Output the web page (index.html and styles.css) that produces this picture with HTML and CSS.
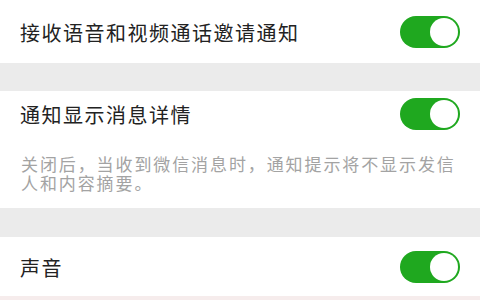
FILE: index.html
```html
<!DOCTYPE html>
<html lang="zh">
<head>
<meta charset="utf-8">
<link rel="stylesheet" href="styles.css">
</head>
<body>
<div class="page">
  <div class="row row-first">
    <span class="title">接收语音和视频通话邀请通知</span>
    <span class="toggle"><span class="knob"></span></span>
  </div>
  <div class="gap gap-1"></div>
  <div class="section">
    <div class="row row-head">
      <span class="title">通知显示消息详情</span>
      <span class="toggle"><span class="knob"></span></span>
    </div>
    <p class="desc">关闭后，当收到微信消息时，通知提示将不显示发信人和内容摘要。</p>
  </div>
  <div class="gap gap-2"></div>
  <div class="row row-last">
    <span class="title">声音</span>
    <span class="toggle"><span class="knob"></span></span>
  </div>
  <div class="edge"></div>
</div>
</body>
</html>
```
FILE: styles.css
```css
* { box-sizing: border-box; }
html, body { margin: 0; padding: 0; background: #ffffff; }
.page {
  width: 480px;
  height: 300px;
  overflow: hidden;
  display: flex;
  flex-direction: column;
  font-family: "Noto Sans CJK SC", "Noto Sans", sans-serif;
}
.row {
  display: flex;
  align-items: center;
  justify-content: space-between;
  padding: 0 20px 0 20px;
  background: #fff;
}
.row-first { height: 63px; }
.row-head { height: 46px; }
.row-last { height: 59px; }
.title {
  font-size: 20px;
  letter-spacing: 1.5px;
  color: #222222;
  line-height: 24px;
  padding-top: 2px;
}
.toggle {
  width: 60px;
  height: 32px;
  border-radius: 16px;
  background: #1fa81f;
  display: flex;
  align-items: center;
  justify-content: flex-end;
  padding-right: 2px;
  flex: none;
}
.knob {
  width: 28px;
  height: 28px;
  border-radius: 50%;
  background: #fff;
}
.gap { background: #ebebeb; flex: none; }
.gap-1 { height: 28px; }
.gap-2 { height: 29px; }
.section { height: 117px; background: #fff; }
.desc {
  width: 470px;
  margin: 18px 0 0 0;
  padding: 0 0 0 21px;
  font-size: 17px;
  letter-spacing: 1.9px;
  line-height: 18.5px;
  color: #a3a3a3;
  word-break: break-all;
}
.edge { height: 4px; background: #f6ecec; flex: none; }
```
